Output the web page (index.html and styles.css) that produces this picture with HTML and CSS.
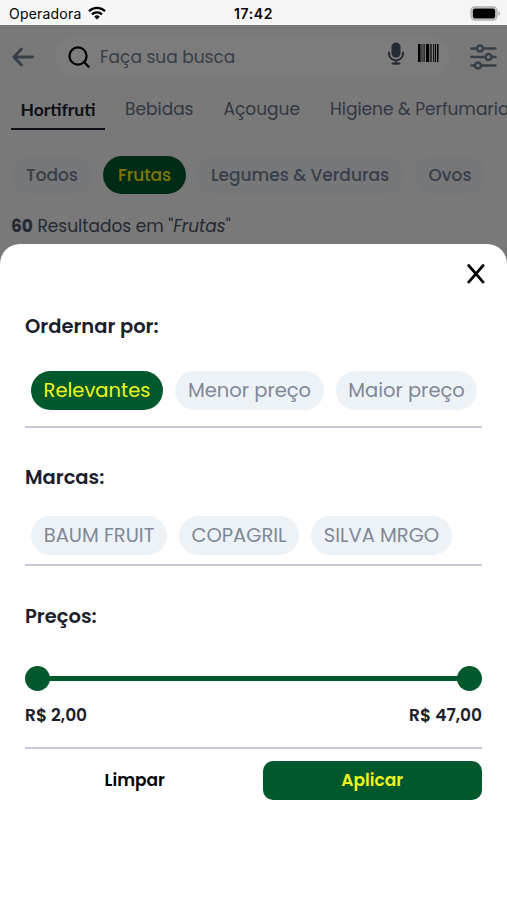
FILE: index.html
```html
<!DOCTYPE html>
<html lang="pt-BR">

<head>
    <meta charset="utf-8">
    <title>Filtros</title>
    <link rel="stylesheet" href="styles.css">
</head>

<body>
    <div class="statusbar">
        <div class="carrier">
            <span class="carrierName">Operadora</span>
            <svg class="wifi" width="18" height="14" viewBox="0 0 18 14" fill="none" stroke="#000" stroke-width="2.3">
                <path d="M1 5.2a11.4 11.4 0 0 1 16 0M4 8.4a7.1 7.1 0 0 1 10 0" />
                <path d="M6.2 10.7a4 4 0 0 1 5.6 0L9 13.6z" fill="#000" stroke="none" />
            </svg>
        </div>
        <span class="clock">17:42</span>
        <svg class="battery" width="31" height="15" viewBox="0 0 31 15">
            <rect x="1" y="1" width="26" height="13" rx="4" fill="#ddd" stroke="#b0b0b0" stroke-width="1.4" />
            <rect x="2.8" y="2.6" width="22.4" height="9.8" rx="2" fill="#000" />
            <path d="M28.5 5.3c2 .7 2 3.7 0 4.4z" fill="#aaa" />
        </svg>
    </div>
    <div class="screen">
        <div class="searchRow">
            <svg class="back" width="22" height="20" viewBox="0 0 22 20" fill="none" stroke="#718096" stroke-width="2.8" stroke-linecap="round" stroke-linejoin="round">
                <path d="M20.5 10H2M9.5 2L1.8 10l7.7 8" />
            </svg>
            <div class="search">
                <svg width="22" height="22" viewBox="0 0 22 22" fill="none" stroke="#000" stroke-width="2.2" stroke-linecap="round">
                    <circle cx="10" cy="10" r="8.6" />
                    <path d="M16.2 16.2l4.4 4.4" />
                </svg>
                <span class="placeholder">Faça sua busca</span>
                <svg class="mic" width="16" height="23" viewBox="0 0 16 23">
                    <rect x="3.5" y="0.5" width="9" height="15" rx="4.5" fill="#4a5568" />
                    <path d="M1 10.5v1a7 7 0 0 0 14 0v-1M8 18.5V22M4.5 21.5h7" fill="none" stroke="#4a5568" stroke-width="1.9" stroke-linecap="round" />
                </svg>
                <svg class="barcode" width="21" height="18" viewBox="0 0 21 18">
                    <path d="M0 0h2.6v18H0zM3.6 0h.8v18h-.8zM5.6 0h1v18h-1zM8 0h3.2v18H8zM12.4 0h1.2v18h-1.2zM15.2 0h1v18h-1zM17 0h1v18h-1zM19 0h1.5v18H19z" />
                </svg>
            </div>
            <svg class="sliders" width="27" height="26" viewBox="0 0 27 26" fill="#f6f6f6" stroke="#718096" stroke-width="2.6" stroke-linecap="round">
                <path d="M1.5 4.5h24M1.5 13h24M1.5 21.5h24" />
                <circle cx="10" cy="4.5" r="3" />
                <circle cx="18.5" cy="13" r="3" />
                <circle cx="8" cy="21.5" r="3" />
            </svg>
        </div>
        <div class="tabs">
            <span class="tab active">Hortifruti</span>
            <span class="tab">Bebidas</span>
            <span class="tab">Açougue</span>
            <span class="tab">Higiene &amp; Perfumaria</span>
        </div>
        <div class="categories">
            <span class="category todos">Todos</span>
            <span class="category frutas active">Frutas</span>
            <span class="category legumes">Legumes &amp; Verduras</span>
            <span class="category ovos">Ovos</span>
        </div>
        <div class="results"><b>60</b> Resultados em "<i>Frutas</i>"</div>
        <div class="overlay"></div>
        <div class="sheet">
            <svg class="close" width="18" height="20" viewBox="0 0 18 20" fill="none" stroke="#000" stroke-width="2.7" stroke-linecap="round">
                <path d="M1.7 1.5l14.4 16.6M16.1 1.5L1.7 18.1" />
            </svg>
            <div class="section sort">
                <h2>Ordernar por:</h2>
                <div class="chips">
                    <span class="chip active relevantes">Relevantes</span>
                    <span class="chip menor">Menor preço</span>
                    <span class="chip maior">Maior preço</span>
                </div>
            </div>
            <div class="section brands">
                <h2>Marcas:</h2>
                <div class="chips">
                    <span class="chip baum">BAUM FRUIT</span>
                    <span class="chip copagril">COPAGRIL</span>
                    <span class="chip silva">SILVA MRGO</span>
                </div>
            </div>
            <div class="section prices">
                <h2>Preços:</h2>
                <div class="range">
                    <span class="knob"></span>
                    <span class="track"></span>
                    <span class="knob"></span>
                </div>
                <div class="values">
                    <span>R$ 2,00</span>
                    <span>R$ 47,00</span>
                </div>
            </div>
            <div class="actions">
                <span class="button">Limpar</span>
                <span class="button apply">Aplicar</span>
            </div>
        </div>
    </div>
</body>

</html>
```
FILE: styles.css
```css
* {
    box-sizing: border-box;
}

body {
    margin: 0;
    height: 900px;
    display: flex;
    flex-direction: column;
    overflow: hidden;
    background: #f6f6f6;
    font-family: Poppins, Inter, sans-serif;
    color: #1a202c;
}

span,
h2,
.results {
    white-space: nowrap;
}

svg {
    display: block;
    flex: none;
}

.statusbar {
    height: 25px;
    flex: none;
    display: grid;
    grid-template-columns: 1fr auto 1fr;
    align-items: center;
    padding: 1px 6px 0 9px;
    color: #000;
    font-family: Inter, sans-serif;
}

.carrier {
    display: flex;
    align-items: center;
    gap: 6px;
    font-size: 14px;
}

.carrierName {
    width: 73px;
    letter-spacing: 0.2px;
}

.clock {
    margin-left: -3px;
    font-size: 14px;
    font-weight: 600;
    letter-spacing: 0.6px;
}

.battery {
    justify-self: end;
}

/* page behind the sheet */
.screen {
    position: relative;
    flex: 1;
    overflow: hidden;
}

.searchRow {
    display: flex;
    align-items: center;
    height: 42px;
    margin-top: 11px;
    padding-left: 12px;
}

.search {
    display: flex;
    align-items: center;
    width: 395px;
    height: 41px;
    margin: 0 20px 0 21px;
    padding: 0 11px 0 13px;
    border-radius: 21px;
    background: #fdfdfd;
}

.placeholder {
    flex: 1;
    margin-left: 10px;
    font-size: 17px;
    color: #718096;
}

.mic {
    margin: -7px 14px 0 0;
}

.barcode {
    margin-top: -9px;
}

.tabs {
    display: flex;
    height: 37px;
    margin-top: 15px;
    padding-left: 11px;
    font-size: 17px;
    line-height: 32px;
    color: #66728a;
}

.tab {
    flex: none;
    margin-right: 30px;
}

.tab.active {
    width: 94px;
    margin-right: 20px;
    border-bottom: 2px solid #1a202c;
    font-family: Lato, sans-serif;
    font-size: 17.5px;
    font-weight: 700;
    text-align: center;
    line-height: 34px;
    color: #1a202c;
}

.categories {
    display: flex;
    gap: 10px;
    margin-top: 26px;
    padding-left: 11px;
}

.category {
    flex: none;
    height: 38px;
    border-radius: 19px;
    background: #eff3f6;
    font-size: 17px;
    font-weight: 500;
    line-height: 38px;
    text-align: center;
    color: #718096;
}

.category.active {
    background: #00592d;
    color: #fff01e;
}

.todos {
    width: 82px;
}

.frutas {
    width: 83px;
}

.legumes {
    width: 208px;
}

.ovos {
    width: 72px;
}

.results {
    margin-top: 20px;
    padding-left: 11px;
    font-size: 17px;
    line-height: 24px;
    color: #4a5568;
}

.overlay {
    position: absolute;
    inset: 0;
    background: rgba(0, 0, 0, 0.51);
}

/* bottom sheet */
.sheet {
    position: absolute;
    inset: 219px 0 0;
    padding: 20px 25px 0;
    border-radius: 20px 20px 0 0;
    background: #fff;
}

.close {
    margin: 0 -3px 0 auto;
}

.section {
    border-bottom: 2px solid #c3c8d4;
}

.section h2 {
    margin: 0;
    font-size: 19.5px;
    font-weight: 600;
    line-height: 28px;
}

.sort {
    height: 144px;
    padding-top: 29px;
}

.brands {
    height: 138px;
    padding-top: 36px;
}

.prices {
    height: 183px;
    padding-top: 37px;
}

.chips {
    display: flex;
    gap: 12px;
    margin: 30px 0 0 6px;
}

.brands .chips {
    margin-top: 24px;
}

.chip {
    height: 39px;
    border-radius: 20px;
    background: #edf2f7;
    font-size: 19.5px;
    line-height: 39px;
    text-align: center;
    color: #808898;
}

.chip.active {
    background: #00592d;
    color: #f2f51b;
}

.relevantes {
    width: 132px;
}

.menor {
    width: 149px;
}

.maior {
    width: 141px;
}

.baum {
    width: 136px;
}

.copagril {
    width: 120px;
}

.silva {
    width: 141px;
}

.range {
    display: flex;
    align-items: center;
    margin-top: 35px;
}

.knob {
    width: 25px;
    height: 25px;
    border-radius: 50%;
    background: #00592d;
}

.track {
    flex: 1;
    height: 5px;
    margin: 0 -2px;
    background: #00592d;
}

.values {
    display: flex;
    justify-content: space-between;
    margin-top: 12px;
    font-size: 17px;
    font-weight: 600;
    line-height: 24px;
}

.actions {
    display: grid;
    grid-template-columns: 1fr 1fr;
    gap: 18px;
    margin-top: 12px;
}

.button {
    height: 39px;
    border-radius: 10px;
    font-size: 17px;
    font-weight: 600;
    line-height: 39px;
    text-align: center;
    color: #000;
}

.apply {
    background: #00592d;
    color: #f2f51b;
}
```
